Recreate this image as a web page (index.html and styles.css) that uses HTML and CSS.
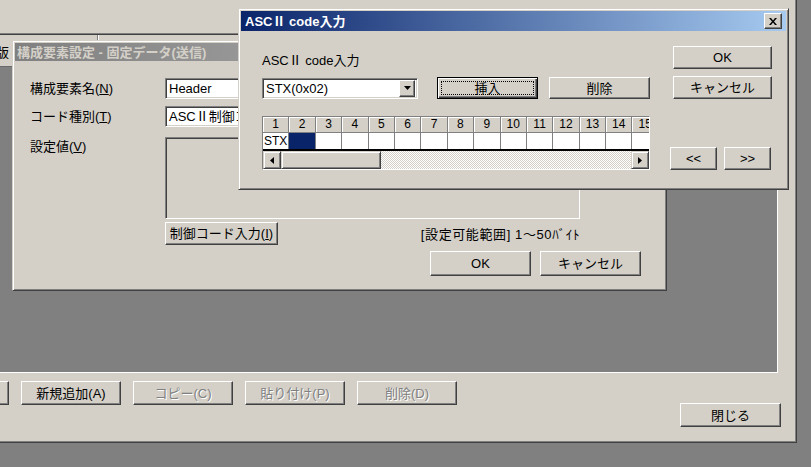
FILE: index.html
```html
<!DOCTYPE html>
<html lang="ja">
<head>
<meta charset="utf-8">
<title>ASCII code入力</title>
<link rel="stylesheet" href="styles.css">
</head>
<body>
<div class="desktop">
  <div class="mainwin">
    <div class="topstrip"></div>
    <div class="list">
      <div class="list-head">
        <span class="col col-a">版</span>
        <span class="col col-b"></span>
      </div>
      <div class="list-body"></div>
    </div>
    <div class="actions">
      <button class="btn act partial">編集(E)</button>
      <button class="btn act">新規追加(A)</button>
      <button class="btn act" disabled>コピー(C)</button>
      <button class="btn act" disabled>貼り付け(P)</button>
      <button class="btn act" disabled>削除(D)</button>
      <button class="btn close-main">閉じる</button>
    </div>
  </div>

  <div class="dialog dlg-comp">
    <div class="titlebar inactive"><span class="title">構成要素設定 - 固定データ(送信)</span></div>
    <div class="comp-body">
      <div class="frow r1">
        <label class="flabel">構成要素名(<u>N</u>)</label>
        <div class="field">Header</div>
      </div>
      <div class="frow r2">
        <label class="flabel">コード種別(<u>T</u>)</label>
        <div class="field">ASCⅡ制御コード</div>
      </div>
      <div class="frow r3">
        <label class="flabel top">設定値(<u>V</u>)</label>
        <div class="field area"></div>
      </div>
      <div class="frow r4">
        <span class="flabel"></span>
        <div class="underarea">
          <button class="btn ctl">制御コード入力(<u>I</u>)</button>
          <span class="range">[設定可能範囲] 1〜50ﾊﾞｲﾄ</span>
        </div>
      </div>
      <div class="okrow">
        <button class="btn okbtn">OK</button>
        <button class="btn okbtn">キャンセル</button>
      </div>
    </div>
  </div>

  <div class="dialog dlg-ascii">
    <div class="titlebar active">
      <span class="title">ASCⅡ code入力</span>
      <span class="xbtn"><svg width="8" height="7" viewBox="0 0 8 7"><path d="M0 0h2l2 2.5L6 0h2L5 3.5 8 7H6L4 4.5 2 7H0l3-3.5z" fill="#000"/></svg></span>
    </div>
    <div class="ascii-body">
      <div class="acol-left">
        <div class="alabel">ASCⅡ code入力</div>
        <div class="arow">
          <div class="combo">
            <span class="combo-text">STX(0x02)</span>
            <span class="combo-btn"><svg width="7" height="4" viewBox="0 0 7 4"><path d="M0 0h7L3.5 4z" fill="#000"/></svg></span>
          </div>
          <button class="btn ins"><span class="focus">挿入</span></button>
          <button class="btn del">削除</button>
        </div>
        <div class="grid">
          <div class="ghead">
            <span>1</span><span>2</span><span>3</span><span>4</span><span>5</span><span>6</span><span>7</span><span>8</span><span>9</span><span>10</span><span>11</span><span>12</span><span>13</span><span>14</span><span>15</span><span>16</span>
          </div>
          <div class="gdata">
            <span>STX</span><span class="sel"></span><span></span><span></span><span></span><span></span><span></span><span></span><span></span><span></span><span></span><span></span><span></span><span></span><span></span><span></span>
          </div>
          <div class="hscroll">
            <span class="sbtn"><svg width="4" height="7" viewBox="0 0 4 7"><path d="M4 0v7L0 3.5z" fill="#000"/></svg></span>
            <span class="thumb"></span>
            <span class="track"></span>
            <span class="sbtn"><svg width="4" height="7" viewBox="0 0 4 7"><path d="M0 0v7L4 3.5z" fill="#000"/></svg></span>
          </div>
        </div>
      </div>
      <div class="acol-right">
        <button class="btn rbtn ok1">OK</button>
        <button class="btn rbtn cancel1">キャンセル</button>
        <div class="navrow">
          <button class="btn nav">&lt;&lt;</button>
          <button class="btn nav">&gt;&gt;</button>
        </div>
      </div>
    </div>
  </div>
</div>
</body>
</html>
```

FILE: styles.css
```css
* { box-sizing: border-box; }
html, body { margin: 0; padding: 0; }
body {
  width: 811px;
  height: 467px;
  overflow: hidden;
  background: #808080;
  font-family: "Liberation Sans", "Noto Sans CJK JP", sans-serif;
  font-size: 13px;
  line-height: 15px;
  color: #000;
}
u { text-decoration: underline; }
.desktop { position: relative; width: 811px; height: 467px; }

/* main window */
.mainwin {
  width: 797px;
  height: 443px;
  background: #d4d0c8;
  display: flex;
  flex-direction: column;
  box-shadow: inset -1px -1px #404040, inset -2px -2px #808080;
}
.topstrip { height: 33px; flex: none; }
.list {
  flex: none;
  width: 780px;
  height: 340px;
  margin-left: -2px;
  display: flex;
  flex-direction: column;
  border: 1px solid;
  border-color: #808080 #fff #fff #808080;
}
.list-head {
  height: 33px;
  flex: none;
  display: flex;
  border-top: 1px solid #404040;
  border-bottom: 1px solid #6a6a6a;
  background: #d4d0c8;
}
.col { display: block; height: 100%; }
.col-a {
  width: 99px;
  padding-top: 10px;
  text-indent: -3px;
  border-right: 1px solid #808080;
  overflow: hidden;
  white-space: nowrap;
}
.col-b { flex: 1; box-shadow: inset 1px 0 #fff; }
.list-body { flex: 1; background: #808080; }

.actions {
  flex: 1;
  display: flex;
  align-items: flex-start;
  gap: 12px;
  padding-top: 8px;
}

/* buttons */
.btn {
  font: inherit;
  font-size: 13px;
  line-height: 15px;
  padding: 0;
  margin: 0;
  background: #d4d0c8;
  color: #000;
  border: 1px solid;
  border-color: #fff #404040 #404040 #fff;
  box-shadow: inset -1px -1px #808080;
  display: flex;
  align-items: center;
  justify-content: center;
  flex: none;
  white-space: nowrap;
}
.btn:disabled { color: #808080; text-shadow: 1px 1px #fff; }
.act { width: 100px; height: 24px; }
.partial { margin-left: -91px; }
.close-main { width: 101px; height: 24px; margin-left: auto; margin-top: 22px; margin-right: 16px; }

/* dialogs */
.dialog {
  position: absolute;
  background: #d4d0c8;
  border: 1px solid;
  border-color: #d4d0c8 #404040 #404040 #d4d0c8;
  box-shadow: inset 1px 1px #fff, inset -1px -1px #808080;
  padding: 2px;
  display: flex;
  flex-direction: column;
}
.titlebar {
  flex: none;
  display: flex;
  align-items: center;
  font-weight: bold;
  white-space: nowrap;
  overflow: hidden;
}
.titlebar.inactive {
  height: 18px;
  padding-left: 2px;
  background: linear-gradient(90deg, #808080, #c0c0c0);
  color: #d4d0c8;
}
.titlebar.active {
  height: 20px;
  padding-left: 4px;
  background: linear-gradient(90deg, #0a246a, #a6caf0);
  color: #fff;
}
.title { flex: 1; }
.xbtn {
  width: 18px;
  height: 16px;
  margin-right: 4px;
  background: #d4d0c8;
  border: 1px solid;
  border-color: #fff #404040 #404040 #fff;
  box-shadow: inset -1px -1px #808080;
  display: flex;
  align-items: center;
  justify-content: center;
}

/* background dialog */
.dlg-comp { left: 12px; top: 40px; width: 655px; height: 251px; }
.comp-body { padding: 17px 0 0 15px; display: flex; flex-direction: column; }
.frow { display: flex; align-items: center; }
.r2 { margin-top: 7px; }
.r3 { margin-top: 10px; align-items: flex-start; }
.r4 { margin-top: 3px; }
.flabel { width: 135px; flex: none; white-space: nowrap; }
.flabel.top { padding-top: 2px; }
.field {
  width: 415px;
  height: 21px;
  background: #fff;
  border: 1px solid;
  border-color: #808080 #fff #fff #808080;
  box-shadow: inset 1px 1px #404040, inset -1px -1px #d4d0c8;
  padding: 2px 0 0 3px;
  white-space: nowrap;
  overflow: hidden;
}
.field.area { height: 82px; background: #d4d0c8; }
.underarea {
  width: 415px;
  display: flex;
  align-items: center;
  justify-content: space-between;
}
.ctl { width: 113px; height: 23px; }
.range { padding-top: 2px; white-space: nowrap; letter-spacing: 0.6px; }
.okrow {
  margin-top: 6px;
  display: flex;
  justify-content: flex-end;
  gap: 9px;
  padding-right: 23px;
}
.okbtn { width: 101px; height: 25px; }

/* ASCII dialog */
.dlg-ascii { left: 238px; top: 8px; width: 551px; height: 182px; }
.ascii-body { display: flex; padding-left: 21px; gap: 20px; }
.acol-left { width: 388px; flex: none; display: flex; flex-direction: column; }
.alabel { margin-top: 22px; white-space: nowrap; }
.arow { margin-top: 9px; height: 22px; display: flex; align-items: center; }
.combo {
  width: 156px;
  height: 21px;
  background: #fff;
  border: 1px solid;
  border-color: #808080 #fff #fff #808080;
  box-shadow: inset 1px 1px #404040, inset -1px -1px #d4d0c8;
  display: flex;
  align-items: center;
  padding: 2px 2px 2px 3px;
}
.combo-text { flex: 1; padding-top: 1px; }
.combo-btn {
  width: 16px;
  height: 17px;
  background: #d4d0c8;
  border: 1px solid;
  border-color: #fff #404040 #404040 #fff;
  box-shadow: inset -1px -1px #808080;
  display: flex;
  align-items: center;
  justify-content: center;
}
.ins {
  margin-left: 19px;
  width: 101px;
  height: 22px;
  border-color: #000;
  box-shadow: inset 1px 1px #fff, inset -1px -1px #404040, inset -2px -2px #808080;
}
.focus {
  width: calc(100% - 6px);
  height: calc(100% - 6px);
  border: 1px dotted #000;
  display: flex;
  align-items: center;
  justify-content: center;
}
.del { margin-left: 11px; width: 101px; height: 22px; }

.grid {
  margin-top: 17px;
  width: 388px;
  border: 1px solid;
  border-color: #808080 #fff #fff #808080;
  overflow: hidden;
}
.ghead, .gdata { display: flex; white-space: nowrap; }
.ghead span {
  flex: none;
  width: 26.4px;
  height: 16px;
  background: #d4d0c8;
  border-right: 1px solid #808080;
  border-bottom: 1px solid #808080;
  box-shadow: inset 1px 1px #fff;
  text-align: center;
  font-size: 12px;
  line-height: 15px;
}
.gdata { border-bottom: 2px solid #000; }
.gdata span {
  flex: none;
  width: 26.4px;
  height: 16px;
  background: #fff;
  border-right: 1px solid #808080;
  text-align: center;
  font-size: 12px;
  line-height: 16px;
  overflow: hidden;
}
.gdata span.sel { background: #0a246a; }
.hscroll { height: 18px; display: flex; }
.sbtn, .thumb {
  flex: none;
  background: #d4d0c8;
  border: 1px solid;
  border-color: #d4d0c8 #404040 #404040 #d4d0c8;
  box-shadow: inset 1px 1px #fff, inset -1px -1px #808080;
}
.sbtn { width: 18px; display: flex; align-items: center; justify-content: center; }
.thumb { width: 100px; }
.track {
  flex: 1;
  background: repeating-conic-gradient(#fff 0 25%, #d4d0c8 0 50%) 0 0 / 2px 2px;
}

.acol-right { width: 103px; flex: none; display: flex; flex-direction: column; }
.rbtn { width: 99px; height: 23px; margin-left: 3px; }
.ok1 { margin-top: 15px; }
.cancel1 { margin-top: 7px; }
.navrow { margin-top: 48px; display: flex; gap: 7px; }
.nav { width: 47px; height: 23px; }
```
